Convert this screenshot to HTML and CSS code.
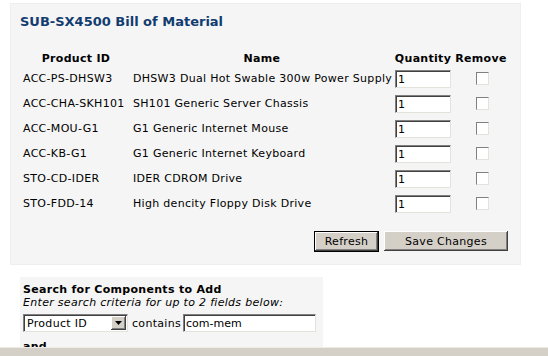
FILE: index.html
```html
<!DOCTYPE html>
<html lang="en">
<head>
  <meta charset="UTF-8" />
  <title>SUB-SX4500 Bill of Material</title>
  <link rel="stylesheet" href="styles.css">
</head>
<body>
  <!-- Bill of material -->
  <div class="bom-panel">
    <h1 class="bom-title">SUB-SX4500 Bill of Material</h1>
    <table class="bom-table">
      <colgroup>
        <col class="col-id">
        <col class="col-name">
        <col class="col-qty">
        <col class="col-remove">
      </colgroup>
      <tr class="head-row">
        <th>Product ID</th>
        <th>Name</th>
        <th>Quantity</th>
        <th>Remove</th>
      </tr>
      <tr>
        <td>ACC-PS-DHSW3</td>
        <td>DHSW3 Dual Hot Swable 300w Power Supply</td>
        <td><input type="text" class="qty" value="1"></td>
        <td class="center"><input type="checkbox" class="check"></td>
      </tr>
      <tr>
        <td>ACC-CHA-SKH101</td>
        <td>SH101 Generic Server Chassis</td>
        <td><input type="text" class="qty" value="1"></td>
        <td class="center"><input type="checkbox" class="check"></td>
      </tr>
      <tr>
        <td>ACC-MOU-G1</td>
        <td>G1 Generic Internet Mouse</td>
        <td><input type="text" class="qty" value="1"></td>
        <td class="center"><input type="checkbox" class="check"></td>
      </tr>
      <tr>
        <td>ACC-KB-G1</td>
        <td>G1 Generic Internet Keyboard</td>
        <td><input type="text" class="qty" value="1"></td>
        <td class="center"><input type="checkbox" class="check"></td>
      </tr>
      <tr>
        <td>STO-CD-IDER</td>
        <td>IDER CDROM Drive</td>
        <td><input type="text" class="qty" value="1"></td>
        <td class="center"><input type="checkbox" class="check"></td>
      </tr>
      <tr>
        <td>STO-FDD-14</td>
        <td>High dencity Floppy Disk Drive</td>
        <td><input type="text" class="qty" value="1"></td>
        <td class="center"><input type="checkbox" class="check"></td>
      </tr>
    </table>
    <div class="button-row">
      <button class="btn btn-default">Refresh</button>
      <button class="btn btn-save">Save Changes</button>
    </div>
  </div>

  <!-- Search -->
  <div class="search-panel">
    <div class="search-title">Search for Components to Add</div>
    <div class="search-hint">Enter search criteria for up to 2 fields below:</div>
    <div class="search-row">
      <div class="select">
        <span class="select-value">Product ID</span>
        <span class="select-arrow">
          <svg width="7" height="4" viewBox="0 0 7 4"><path d="M0 0h7L3.5 4z" fill="#000"/></svg>
        </span>
      </div>
      <span class="contains">contains</span>
      <input type="text" class="search-input" value="com-mem">
    </div>
    <div class="and">and</div>
  </div>

  <div class="scroll-bar"></div>
</body>
</html>
```

FILE: styles.css
```css
* {
  margin: 0;
  padding: 0;
  box-sizing: border-box;
}

body {
  font-family: "DejaVu Sans", Verdana, sans-serif;
  font-size: 11px;
  letter-spacing: 0.3px;
  color: #000;
  background: #fff;
  padding-top: 3px;
  height: 356px;
  overflow: hidden;
}

.bom-panel {
  margin-left: 10px;
  width: 511px;
  height: 262px;
  background: #f5f5f5;
  border: 1px solid #eeeeee;
  padding: 10px 0 0 9px;
}

.bom-title {
  font-size: 13px;
  font-weight: bold;
  letter-spacing: 0;
  color: #123c70;
  height: 36px;
}

.bom-table {
  border-collapse: collapse;
  table-layout: fixed;
  width: 488px;
  margin-left: 1px;
}

.col-id { width: 110px; }
.col-name { width: 262px; }
.col-qty { width: 60px; }
.col-remove { width: 56px; }

.bom-table th {
  font-weight: bold;
  text-align: center;
  height: 16px;
  padding: 0;
  white-space: nowrap;
}

.bom-table td {
  height: 25px;
  padding: 0 2px;
  white-space: nowrap;
  vertical-align: middle;
}

.bom-table td.center {
  text-align: center;
  padding-left: 4px;
}

.qty {
  display: block;
  width: 56px;
  height: 18px;
  font-family: inherit;
  font-size: 11px;
  padding: 1px 2px 0;
  background: #fff;
  border: 1px solid;
  border-color: #808080 #e4e2dc #e4e2dc #808080;
  box-shadow: inset 1px 1px 0 #404040;
  outline: none;
}

.check {
  appearance: none;
  -webkit-appearance: none;
  display: inline-block;
  vertical-align: middle;
  width: 13px;
  height: 13px;
  margin: 0;
  background: #fff;
  border: 1px solid;
  border-color: #808080 #e4e2dc #e4e2dc #808080;
}

.button-row {
  display: flex;
  justify-content: flex-end;
  gap: 5px;
  margin-top: 15px;
  padding-right: 12px;
}

.btn {
  font-family: inherit;
  font-size: 11px;
  letter-spacing: 0.3px;
  color: #000;
  background: #d4d0c8;
  height: 20px;
  border: none;
  box-shadow: inset -1px -1px 0 #404040, inset 1px 1px 0 #fff, inset -2px -2px 0 #808080;
}

.btn-default {
  width: 65px;
  height: 21px;
  border: 1px solid #000;
}

.btn-save {
  width: 124px;
}

.search-panel {
  margin: 12px 0 0 20px;
  width: 303px;
  height: 80px;
  background: #f5f5f5;
  padding: 6px 3px 0;
}

.search-title {
  font-weight: bold;
  font-size: 11px;
  line-height: 13px;
}

.search-hint {
  font-style: italic;
  line-height: 13px;
}

.search-row {
  display: flex;
  align-items: center;
  margin-top: 5px;
  height: 18px;
}

.select {
  display: flex;
  align-items: center;
  width: 105px;
  height: 18px;
  background: #fff;
  border: 1px solid;
  border-color: #808080 #e4e2dc #e4e2dc #808080;
  box-shadow: inset 1px 1px 0 #404040;
  padding: 0 1px 0 3px;
}

.select-value {
  flex: 1;
  padding-top: 1px;
}

.select-arrow {
  display: flex;
  align-items: center;
  justify-content: center;
  width: 15px;
  height: 14px;
  background: #d4d0c8;
  box-shadow: inset -1px -1px 0 #404040, inset 1px 1px 0 #fff, inset -2px -2px 0 #808080;
}

.contains {
  margin: 0 2px 0 4px;
}

.search-input {
  width: 133px;
  height: 18px;
  font-family: inherit;
  font-size: 11px;
  padding: 1px 2px 0;
  background: #fff;
  border: 1px solid;
  border-color: #808080 #e4e2dc #e4e2dc #808080;
  box-shadow: inset 1px 1px 0 #404040;
  outline: none;
}

.and {
  font-weight: bold;
  margin-top: 8px;
}

.scroll-bar {
  position: fixed;
  left: 0;
  bottom: 0;
  width: 100%;
  height: 9px;
  background: #d4d0c8;
  border-top: 1px solid #ecebe6;
}
```
